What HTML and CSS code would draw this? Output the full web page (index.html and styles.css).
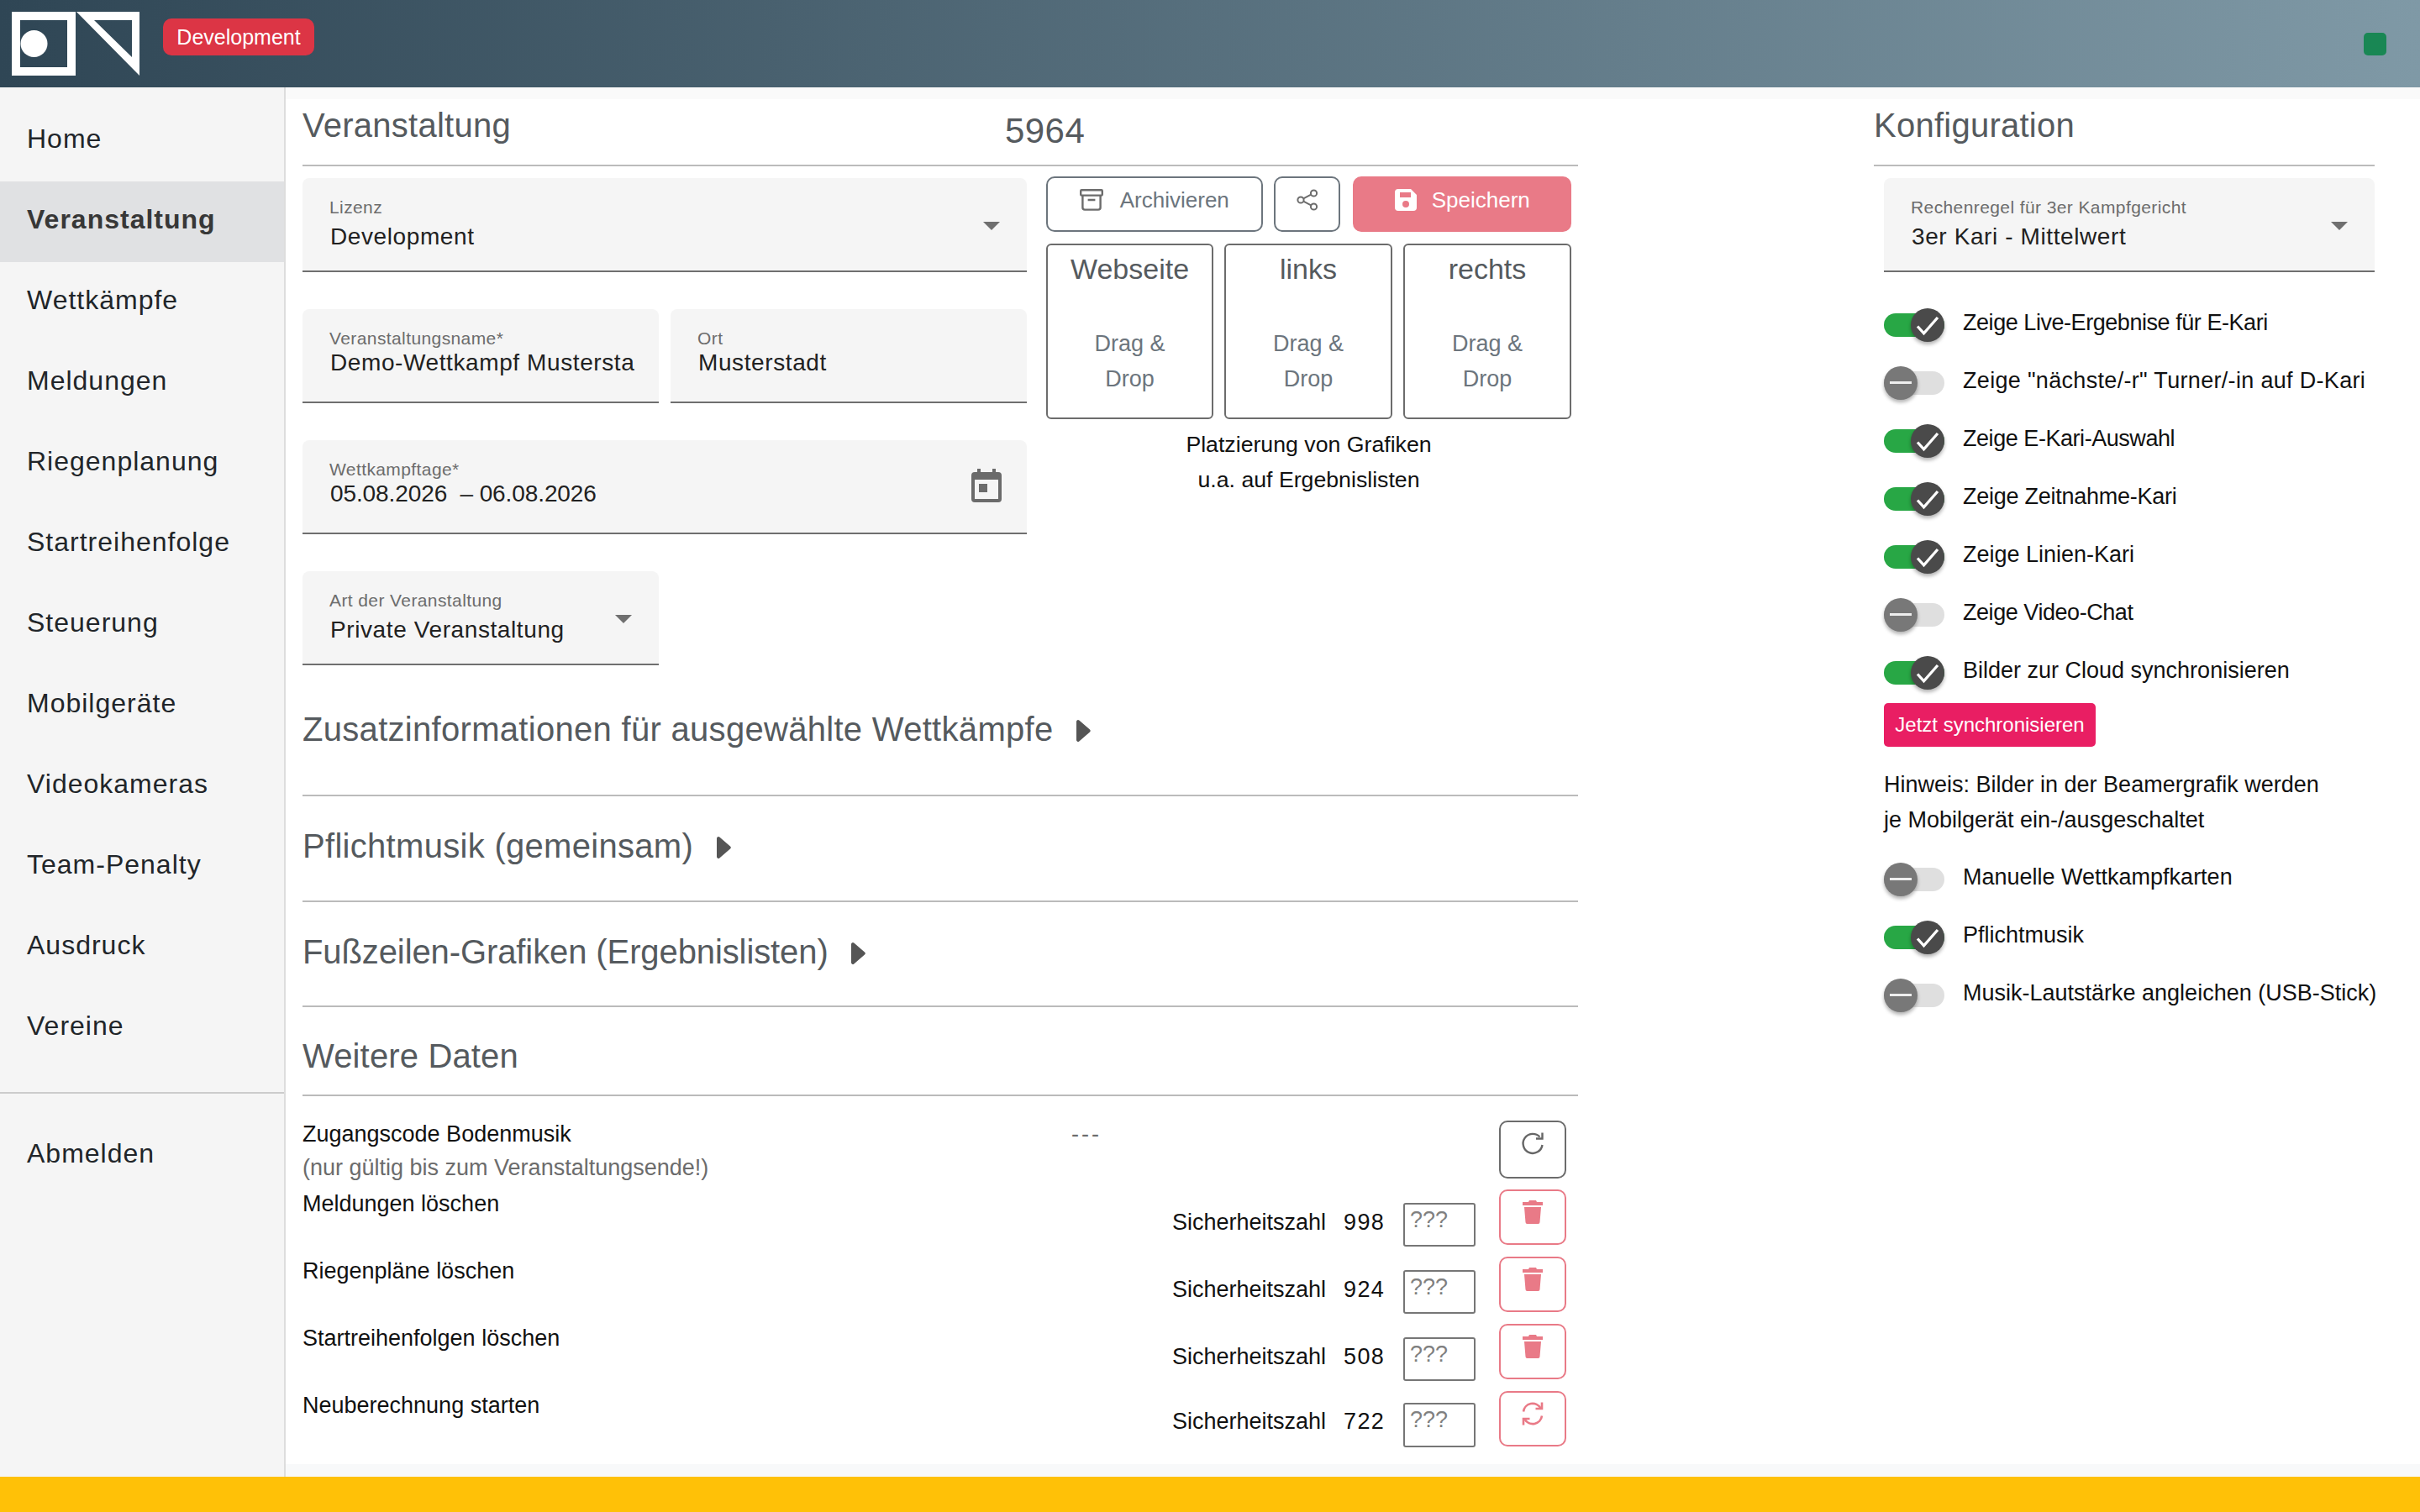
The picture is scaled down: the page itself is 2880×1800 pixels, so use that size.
FILE: index.html
```html
<!DOCTYPE html>
<html lang="de">
<head>
<meta charset="utf-8">
<title>Veranstaltung</title>
<link rel="stylesheet" href="styles.css">
</head>
<body>
<header class="topbar">
  <svg class="logo" viewBox="0 0 180 104" width="180" height="104">
    <path fill="#fff" fill-rule="evenodd" d="M14 14H90V90H14ZM24 24V80H80V24Z"/>
    <circle cx="40.5" cy="52" r="16" fill="#fff"/>
    <path fill="#fff" fill-rule="evenodd" d="M91 14H166V90ZM112 24L157 68V24Z"/>
  </svg>
  <span class="env-badge">Development</span>
  <span class="status-dot"></span>
</header>
<div class="shell">
  <nav class="sidebar">
    <a class="nav-item">Home</a>
    <a class="nav-item active">Veranstaltung</a>
    <a class="nav-item">Wettkämpfe</a>
    <a class="nav-item">Meldungen</a>
    <a class="nav-item">Riegenplanung</a>
    <a class="nav-item">Startreihenfolge</a>
    <a class="nav-item">Steuerung</a>
    <a class="nav-item">Mobilgeräte</a>
    <a class="nav-item">Videokameras</a>
    <a class="nav-item">Team-Penalty</a>
    <a class="nav-item">Ausdruck</a>
    <a class="nav-item">Vereine</a>
    <hr class="nav-sep">
    <a class="nav-item">Abmelden</a>
  </nav>
  <main class="content">
    <section class="left">
      <div class="title-row">
        <h2 class="heading">Veranstaltung</h2>
        <span class="event-id">5964</span>
      </div>
      <div class="top-grid">
        <div class="form-col">
          <div class="field select"><label>Lizenz</label><div class="val">Development</div><i class="arrow"></i></div>
          <div class="field-row">
            <div class="field text"><label>Veranstaltungsname*</label><div class="val">Demo-Wettkampf Mustersta</div></div>
            <div class="field text"><label>Ort</label><div class="val">Musterstadt</div></div>
          </div>
          <div class="field text"><label>Wettkampftage*</label><div class="val date">05.08.2026 &nbsp;– 06.08.2026</div>
            <svg class="cal" viewBox="0 0 36 40" width="36" height="40"><path fill="#6b6b6b" fill-rule="evenodd" d="M7 0h4v4h14V0h4v4h3a4 4 0 0 1 4 4v28a4 4 0 0 1-4 4H4a4 4 0 0 1-4-4V8a4 4 0 0 1 4-4h3ZM4 13v23h28V13Z"/><rect x="9" y="18" width="10" height="10" fill="#6b6b6b"/></svg>
          </div>
          <div class="field select half"><label>Art der Veranstaltung</label><div class="val">Private Veranstaltung</div><i class="arrow"></i></div>
        </div>
        <div class="side-col">
          <div class="btn-row">
            <button class="btn btn-archive">
              <svg viewBox="0 0 28 26" width="28" height="26" fill="none" stroke="#6c6c6c" stroke-width="2.4"><rect x="1.2" y="1.2" width="25.6" height="6.4" rx="1"/><path d="M3.4 7.6V22a2.6 2.6 0 0 0 2.6 2.6h16a2.6 2.6 0 0 0 2.6-2.6V7.6M9.6 13h8.8"/></svg>
              Archivieren
            </button>
            <button class="btn btn-share">
              <svg viewBox="0 0 26 26" width="26" height="26" fill="none" stroke="#6c6c6c" stroke-width="2"><circle cx="20.5" cy="5" r="3.6"/><circle cx="5" cy="13" r="3.6"/><circle cx="20.5" cy="21" r="3.6"/><path d="M8.2 11.3l9-4.6M8.2 14.7l9 4.6"/></svg>
            </button>
            <button class="btn btn-save">
              <svg viewBox="0 0 26 26" width="26" height="26"><path fill="#fff" fill-rule="evenodd" d="M4 0h15l7 7v15a4 4 0 0 1-4 4H4a4 4 0 0 1-4-4V4a4 4 0 0 1 4-4ZM6 4v6h13V4ZM13 14a4 4 0 1 0 0 8 4 4 0 0 0 0-8Z"/></svg>
              Speichern
            </button>
          </div>
          <div class="drop-row">
            <div class="drop"><div class="drop-title">Webseite</div><div class="drop-hint">Drag &amp;<br>Drop</div></div>
            <div class="drop"><div class="drop-title">links</div><div class="drop-hint">Drag &amp;<br>Drop</div></div>
            <div class="drop"><div class="drop-title">rechts</div><div class="drop-hint">Drag &amp;<br>Drop</div></div>
          </div>
          <p class="drop-note">Platzierung von Grafiken<br>u.a. auf Ergebnislisten</p>
        </div>
      </div>
      <h2 class="collapse first">Zusatzinformationen für ausgewählte Wettkämpfe <svg class="caret" viewBox="0 0 20 28" width="20" height="28"><path fill="#555" d="M2 3a2 2 0 0 1 3.3-1.5L18 12.5a2 2 0 0 1 0 3L5.3 26.500A2 2 0 0 1 2 25Z"/></svg></h2>
      <h2 class="collapse second">Pflichtmusik (gemeinsam) <svg class="caret" viewBox="0 0 20 28" width="20" height="28"><path fill="#555" d="M2 3a2 2 0 0 1 3.3-1.5L18 12.5a2 2 0 0 1 0 3L5.3 26.500A2 2 0 0 1 2 25Z"/></svg></h2>
      <h2 class="collapse third">Fußzeilen-Grafiken (Ergebnislisten) <svg class="caret" viewBox="0 0 20 28" width="20" height="28"><path fill="#555" d="M2 3a2 2 0 0 1 3.3-1.5L18 12.5a2 2 0 0 1 0 3L5.3 26.500A2 2 0 0 1 2 25Z"/></svg></h2>
      <h2 class="collapse fourth">Weitere Daten</h2>
      <div class="data-row code-row">
        <div class="data-label">Zugangscode Bodenmusik<br><span class="muted">(nur gültig bis zum Veranstaltungsende!)</span></div>
        <div class="code">---</div>
        <button class="square tall">
          <svg viewBox="0 0 28 30" width="28" height="30" fill="none" stroke="#666" stroke-width="2.4"><path d="M22.500 6.500A11.500 11.500 0 1 0 25.500 16"/><path d="M25.500 1.500V8.500H18"/></svg>
        </button>
      </div>
      <div class="data-row">
        <div class="data-label">Meldungen löschen</div>
        <div class="safe"><span>Sicherheitszahl</span><span class="num">998</span><span class="qbox">???</span></div>
        <button class="square danger"><svg class="tr" viewBox="0 0 24 28" width="24" height="28"><path fill="#e97a87" d="M8 0h8l1 2h7v4H0V2h7ZM2 8h20l-1.500 18a2 2 0 0 1-2 2h-13a2 2 0 0 1-2-2Z"/></svg></button>
      </div>
      <div class="data-row">
        <div class="data-label">Riegenpläne löschen</div>
        <div class="safe"><span>Sicherheitszahl</span><span class="num">924</span><span class="qbox">???</span></div>
        <button class="square danger"><svg class="tr" viewBox="0 0 24 28" width="24" height="28"><path fill="#e97a87" d="M8 0h8l1 2h7v4H0V2h7ZM2 8h20l-1.500 18a2 2 0 0 1-2 2h-13a2 2 0 0 1-2-2Z"/></svg></button>
      </div>
      <div class="data-row">
        <div class="data-label">Startreihenfolgen löschen</div>
        <div class="safe"><span>Sicherheitszahl</span><span class="num">508</span><span class="qbox">???</span></div>
        <button class="square danger"><svg class="tr" viewBox="0 0 24 28" width="24" height="28"><path fill="#e97a87" d="M8 0h8l1 2h7v4H0V2h7ZM2 8h20l-1.500 18a2 2 0 0 1-2 2h-13a2 2 0 0 1-2-2Z"/></svg></button>
      </div>
      <div class="data-row last">
        <div class="data-label">Neuberechnung starten</div>
        <div class="safe"><span>Sicherheitszahl</span><span class="num">722</span><span class="qbox">???</span></div>
        <button class="square danger"><svg class="tr" viewBox="0 0 28 30" width="28" height="30" fill="none" stroke="#e97a87" stroke-width="2.600"><path d="M3 12.500A11 11 0 0 1 23.500 8.500"/><path d="M25 1.500V9h-7.500"/><path d="M25 17.500A11 11 0 0 1 4.500 21.500"/><path d="M3 28.500V21h7.500"/></svg></button>
      </div>
    </section>
    <aside class="right">
      <h2 class="heading config-head">Konfiguration</h2>
      <div class="field select config-select"><label>Rechenregel für 3er Kampfgericht</label><div class="val">3er Kari - Mittelwert</div><i class="arrow"></i></div>
      <div class="toggles">
        <div class="toggle on"><span class="track"><span class="thumb"><svg viewBox="0 0 24 24" width="36" height="36"><path fill="none" stroke="#fff" stroke-width="2.200" d="M4 13l5 5.500L20 6"/></svg></span></span><span class="toggle-text tight">Zeige Live-Ergebnise für E-Kari</span></div>
        <div class="toggle"><span class="track"><span class="thumb"><i></i></span></span><span class="toggle-text wide">Zeige "nächste/-r" Turner/-in auf D-Kari</span></div>
        <div class="toggle on"><span class="track"><span class="thumb"><svg viewBox="0 0 24 24" width="36" height="36"><path fill="none" stroke="#fff" stroke-width="2.200" d="M4 13l5 5.500L20 6"/></svg></span></span><span class="toggle-text tight">Zeige E-Kari-Auswahl</span></div>
        <div class="toggle on"><span class="track"><span class="thumb"><svg viewBox="0 0 24 24" width="36" height="36"><path fill="none" stroke="#fff" stroke-width="2.200" d="M4 13l5 5.500L20 6"/></svg></span></span><span class="toggle-text slight">Zeige Zeitnahme-Kari</span></div>
        <div class="toggle on"><span class="track"><span class="thumb"><svg viewBox="0 0 24 24" width="36" height="36"><path fill="none" stroke="#fff" stroke-width="2.200" d="M4 13l5 5.500L20 6"/></svg></span></span><span class="toggle-text">Zeige Linien-Kari</span></div>
        <div class="toggle"><span class="track"><span class="thumb"><i></i></span></span><span class="toggle-text tight">Zeige Video-Chat</span></div>
        <div class="toggle on"><span class="track"><span class="thumb"><svg viewBox="0 0 24 24" width="36" height="36"><path fill="none" stroke="#fff" stroke-width="2.200" d="M4 13l5 5.500L20 6"/></svg></span></span><span class="toggle-text">Bilder zur Cloud synchronisieren</span></div>
      </div>
      <button class="sync-btn">Jetzt synchronisieren</button>
      <p class="hint">Hinweis: Bilder in der Beamergrafik werden<br>je Mobilgerät ein-/ausgeschaltet</p>
      <div class="toggles">
        <div class="toggle"><span class="track"><span class="thumb"><i></i></span></span><span class="toggle-text">Manuelle Wettkampfkarten</span></div>
        <div class="toggle on"><span class="track"><span class="thumb"><svg viewBox="0 0 24 24" width="36" height="36"><path fill="none" stroke="#fff" stroke-width="2.200" d="M4 13l5 5.500L20 6"/></svg></span></span><span class="toggle-text">Pflichtmusik</span></div>
        <div class="toggle"><span class="track"><span class="thumb"><i></i></span></span><span class="toggle-text">Musik-Lautstärke angleichen (USB-Stick)</span></div>
      </div>
    </aside>
  </main>
</div>
<footer class="bottom"></footer>
</body>
</html>
```

FILE: styles.css
```css
* { box-sizing: border-box; }
html, body { margin: 0; height: 100%; }
body {
  display: grid;
  grid-template-rows: 104px 1fr 42px;
  height: 1800px;
  font-family: "Liberation Sans", Arial, sans-serif;
  color: #212529;
  overflow: hidden;
}
.topbar {
  display: flex;
  align-items: center;
  background: linear-gradient(90deg, #2f4655 0%, #7f99a6 100%);
}
.logo { flex: none; }
.env-badge {
  margin-left: 14px;
  margin-top: -16px;
  width: 180px;
  height: 44px;
  line-height: 44px;
  text-align: center;
  border-radius: 10px;
  background: #dc3545;
  color: #fff;
  font-size: 25px;
}
.status-dot {
  margin-left: auto;
  margin-right: 40px;
  width: 27px;
  height: 27px;
  border-radius: 5px;
  background: #198754;
}
.shell { display: grid; grid-template-columns: 340px 1fr; min-height: 0; }
.sidebar {
  background: #f5f5f5;
  border-right: 2px solid #ddd;
  padding-top: 16px;
}
.nav-item {
  display: block;
  height: 96px;
  line-height: 90px;
  padding-left: 32px;
  font-size: 32px;
  letter-spacing: 1px;
  color: #212529;
}
.nav-item.active { background: #e0e1e3; font-weight: 700; color: #373737; }
.nav-sep { margin: 28px 0 26px; border: 0; border-top: 2px solid #ccc; }
.content {
  background: #fff;
  border-top: 14px solid #fafafa;
  border-bottom: 15px solid #f8f9fa;
  display: grid;
  grid-template-columns: 1518px 596px;
  column-gap: 352px;
  padding-left: 20px;
  min-height: 0;
}
.left, .right { min-width: 0; }
.heading {
  margin: 0;
  padding-top: 6px;
  font-weight: 400;
  font-size: 40px;
  letter-spacing: .25px;
  color: #555a5e;
  line-height: 50px;
}
.title-row {
  height: 80px;
  border-bottom: 2px solid #bbb;
  display: flex;
}
.event-id { margin-left: 588px; margin-top: 13px; font-size: 42px; letter-spacing: .5px; color: #555a5e; line-height: 50px; }
.top-grid { display: grid; grid-template-columns: 862px 625px; column-gap: 23px; padding-top: 14px; }
.form-col { display: flex; flex-direction: column; gap: 44px; }
.field-row { display: grid; grid-template-columns: 424px 424px; column-gap: 14px; }
.field {
  position: relative;
  height: 112px;
  padding: 20px 32px 0;
  background: #f5f5f5;
  border-radius: 8px 8px 0 0;
  border-bottom: 2px solid #6f6f6f;
}
.field label { display: block; font-size: 21px; line-height: 30px; color: #6c6c6c; letter-spacing: .4px; }
.field .val { padding-left: 1px; font-size: 28px; line-height: 36px; color: #212121; letter-spacing: .6px; white-space: nowrap; }
.field.select label { margin-bottom: 2px; }
.field.text .val { margin-top: -4px; }
.field .val.date { letter-spacing: -.1px; }
.half { width: 424px; }
.arrow {
  position: absolute;
  right: 32px;
  top: 52px;
  width: 0;
  height: 0;
  border-left: 10px solid transparent;
  border-right: 10px solid transparent;
  border-top: 10px solid #6f6f6f;
}
.cal { position: absolute; right: 30px; top: 34px; }
.side-col { margin-top: -2px; }
.btn-row { display: flex; gap: 13px; height: 66px; }
.btn {
  display: flex;
  align-items: center;
  justify-content: center;
  gap: 20px;
  height: 66px;
  background: #fff;
  border: 2px solid #6c757d;
  border-radius: 10px;
  font: inherit;
  font-size: 26px;
  color: #6c757d;
  padding: 0 0 10px;
}
.btn-archive { width: 258px; }
.btn-share { width: 80px; }
.btn-save { width: 260px; margin-left: 2px; gap: 18px; background: #e97a87; border-color: #e97a87; color: #fff; }
.drop-row { display: grid; grid-template-columns: 199px 200px 200px; column-gap: 13px; margin-top: 14px; }
.drop {
  height: 209px;
  border: 2px solid #6c6c6c;
  border-radius: 6px;
  text-align: center;
  padding-top: 6px;
}
.drop-title { font-size: 34px; line-height: 44px; color: #555a5e; }
.drop-hint { margin-top: 46px; font-size: 27px; line-height: 42px; color: #6c757d; }
.drop-note { margin: 9px 0 0; text-align: center; font-size: 26.700px; line-height: 42px; color: #111; }
.collapse {
  margin: 0;
  font-weight: 400;
  font-size: 40px;
  line-height: 50px;
  color: #555a5e;
  border-bottom: 2px solid #bbb;
}
.caret { margin-left: 14px; vertical-align: -2px; }
.first { margin-top: 51px; padding-bottom: 53px; letter-spacing: .3px; }
.second { padding-top: 34px; padding-bottom: 40px; letter-spacing: .3px; }
.third { padding-top: 34px; padding-bottom: 39px; letter-spacing: -.1px; }
.fourth { padding-top: 33px; padding-bottom: 21px; letter-spacing: .15px; }
.data-row { display: flex; align-items: flex-start; height: 80px; font-size: 27px; line-height: 40px; color: #111; }
.code-row { height: 83px; margin-top: 25px; }
.data-label { width: 915px; flex: none; }
.muted { color: #6c6c6c; }
.code { flex: 1; color: #6c6c6c; letter-spacing: 3px; }
.safe { display: grid; grid-template-columns: 204px 71px 86px; margin: 22px 0 0 120px; flex: none; }
.num { letter-spacing: 1.400px; }
.qbox {
  margin-top: -3px;
  height: 52px;
  border: 2px solid #767676;
  border-radius: 3px;
  padding-left: 6px;
  line-height: 36px;
  color: #808080;
}
.last .safe { margin-top: 19px; }
.last .qbox { margin-top: -2px; height: 53px; }
.square {
  flex: none;
  width: 80px;
  height: 66px;
  background: #fff;
  border: 2px solid #6c6c6c;
  border-radius: 10px;
  padding: 0 0 10px;
  margin: 3px 14px 0 auto;
}
.square.tall { height: 69px; margin-top: 4px; }
.square.danger { border-color: #e97a87; }
.right .field { margin-left: 12px; }
.config-head { height: 80px; border-bottom: 2px solid #bbb; }
.config-select { margin-top: 14px; margin-bottom: 28px; }
.toggles { display: flex; flex-direction: column; margin-left: 12px; }
.toggle {
  display: flex;
  align-items: center;
  height: 69px;
  font-size: 27px;
  color: #111;
  white-space: nowrap;
}
.toggle-text { padding-bottom: 4px; }
.toggle-text.tight { letter-spacing: -.45px; }
.toggle-text.slight { letter-spacing: -.25px; }
.toggle-text.wide { letter-spacing: .32px; }
.track {
  position: relative;
  flex: none;
  width: 72px;
  height: 28px;
  margin-right: 22px;
  border-radius: 14px;
  background: #dfdfdf;
}
.thumb {
  position: absolute;
  left: 0;
  top: -6px;
  width: 40px;
  height: 40px;
  border-radius: 50%;
  background: #787878;
  box-shadow: 0 3px 4px rgba(0,0,0,.3);
  display: flex;
  align-items: center;
  justify-content: center;
}
.thumb i { width: 26px; height: 3px; background: #eee; }
.toggle.on .track { background: #28a745; }
.toggle.on .thumb { left: 32px; background: #4a4a4a; }
.sync-btn {
  display: block;
  margin: 2px 0 0 12px;
  width: 252px;
  height: 52px;
  border: 0;
  border-radius: 5px;
  background: #e91e63;
  color: #fff;
  font: inherit;
  font-size: 24px;
}
.hint { margin: 24px 0 15px 12px; font-size: 27px; line-height: 42px; color: #111; }
.bottom { background: #ffc107; }
```
